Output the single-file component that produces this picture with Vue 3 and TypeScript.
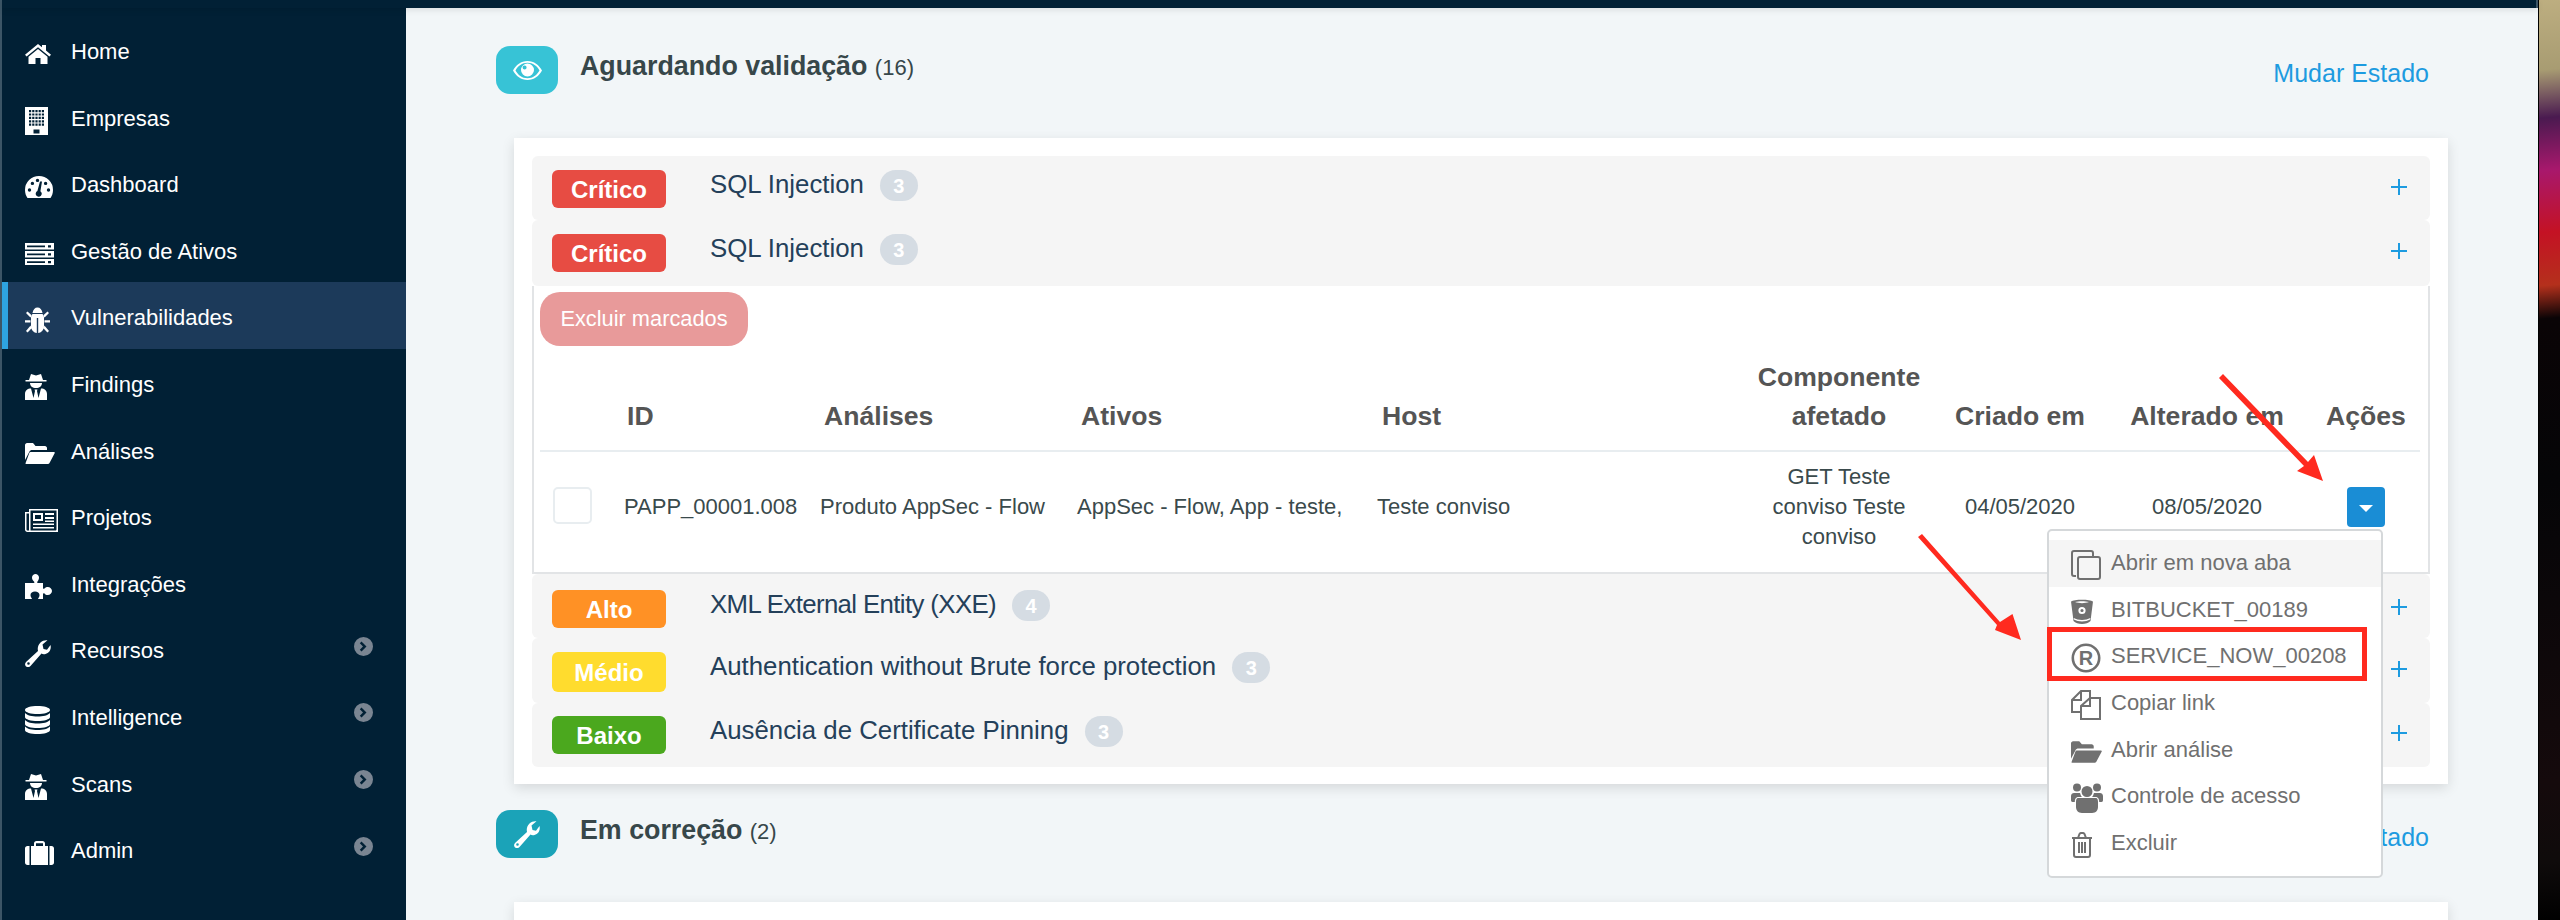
<script setup lang="ts">
function dot(x: number, y: number, r: number): string {
  return `M${x - r} ${y}a${r} ${r} 0 1 0 ${2 * r} 0a${r} ${r} 0 1 0 ${-2 * r} 0Z`
}

function buildingPath(): string {
  let d = 'M0 0H23V28H0Z'
  for (const y of [3, 6.4, 9.8, 13.2, 16.6]) {
    for (const x of [4, 7.2, 10.4, 13.6, 16.8]) d += `M${x} ${y}h2.2v2.2h-2.2z`
  }
  return d + 'M8.5 22.5h6v4h-6z'
}

interface Glyph { w: number; h: number; d: string }

const folder =
  'M0 17V2C0 1 1 0 2 0H8L10.5 3H20C21 3 22 4 22 5V7H7C6 7 5 7.5 4.5 8.5ZM5.5 9H29C30 9 30 10 29.5 10.5L24.5 20C24 20.7 23.5 21 22.5 21H1.5C.5 21 .3 20.5 .7 19.7L4.3 10C4.6 9.4 5 9 5.5 9Z'
const secret =
  'M6 0L11 1.5L16 0L18 6H21.5V7.5H.5V6H4ZM5 9H17C17 12 14.5 14 11 14C7.5 14 5 12 5 9ZM0 26V20C0 16.5 2.5 14.5 6 14.5L8.5 24L10 17L9.5 15.5H12.5L12 17L13.5 24L16 14.5C19.5 14.5 22 16.5 22 20V26Z'
const wrench =
  'M25.5 5C26.5 9 24.5 13 20.5 14C19 14.3 17.5 14.3 16.5 13.5L5.5 26C4 27.5 2 27.3 .8 26.2C-.3 25 -.2 23 1.3 21.7L13 11C12.3 8 13 5 15.5 2.5C17.5 .6 20 0 22.5 .3L17.5 4.5L18.5 9L22 9.8Z' +
  dot(3.5, 23.5, 1.3)

const nav: { label: string; icon: Glyph; more?: boolean; active?: boolean }[] = [
  { label: 'Home', icon: { w: 26, h: 20, d: 'M13 0L17 3.3V1H21V6.6L26 10.8L24.4 12.6L13 3.2L1.6 12.6L0 10.8ZM13 5L22.5 12.8V20H15.5V14H10.5V20H3.5V12.8Z' } },
  { label: 'Empresas', icon: { w: 23, h: 28, d: buildingPath() } },
  { label: 'Dashboard', icon: { w: 28, h: 22, d: 'M14 0A14 14 0 0 1 28 14C28 17 27 20 25.5 22H2.5C1 20 0 17 0 14A14 14 0 0 1 14 0Z' + dot(4.5, 14, 1.7) + dot(7.4, 7.4, 1.7) + dot(23.5, 14, 1.7) + dot(20.6, 7.4, 1.7) + dot(12.5, 4.4, 1.7) + 'M17 5.5L15.4 15.2A3 3 0 1 1 12.4 15L15 5.5Z' } },
  { label: 'Gestão de Ativos', icon: { w: 29, h: 22, d: 'M0 0H29V6.5H0ZM2 2.4V4.2H20V2.4ZM23 2.2V4.4H26V2.2ZM0 8H29V14.5H0ZM2 10.4V12.2H20V10.4ZM23 10.2V12.4H26V10.2ZM0 16H29V22H0ZM2 18.2V20H20V18.2ZM23 18V20.2H26V18Z' } },
  { label: 'Vulnerabilidades', active: true, icon: { w: 25, h: 26, d: 'M7.5 7H17.5L19 9V19C19 23 16 26 13.2 26V11H11.8V26C9 26 6 23 6 19V9ZM7.5 6C8 2.5 10 .5 12.5 .5C15 .5 17 2.5 17.5 6ZM5.4 10.5L1 6L2.5 4.5L6.9 8.5ZM5.5 13.2H0V15.4H5.5ZM5.6 18.5L1 24L2.6 25.6L6.4 21.5ZM19.6 10.5L24 6L22.5 4.5L18.1 8.5ZM19.5 13.2H25V15.4H19.5ZM19.4 18.5L24 24L22.4 25.6L18.6 21.5Z' } },
  { label: 'Findings', icon: { w: 22, h: 26, d: secret } },
  { label: 'Análises', icon: { w: 30, h: 21, d: folder } },
  { label: 'Projetos', icon: { w: 33, h: 23, d: 'M4 0H33V23H2.5C1 23 0 22 0 20.5V3H4ZM1.5 4.5V20.5C1.5 21 2 21.5 2.5 21.5H4.2C4 21 4 20.5 4 20V4.5ZM5.5 1.5H31.5V20.5C31.5 21 31 21.5 30.5 21.5H5.5ZM8 4H18V12H8ZM10 6V10H16V6ZM20 4H29V6H20ZM20 8H29V10H20ZM20 11.5H29V13H20ZM8 14.5H29V16H8ZM8 18H29V19.5H8Z' } },
  { label: 'Integrações', icon: { w: 27, h: 25, d: 'M0 9H9C9.5 9 9.5 8 9 7.5C7.5 6 7 5 7 3.5C7 1.5 8.8 0 10.5 0C12.2 0 14 1.5 14 3.5C14 5 13.5 6 12.5 7.5C12 8 12 9 12.8 9H18V14C18 15 19 15 19.5 14.5C20.5 13.5 21 13 22.8 13C25 13 27 15 27 17C27 19 25 21 22.8 21C21 21 20.5 20.5 19.5 19.5C19 19 18 19 18 20V25H13C13.5 23.5 14.5 23 14.5 21C14.5 19 12.5 17.5 10 17.5C7.5 17.5 5.5 19 5.5 21C5.5 23 6.5 23.5 7 25H0Z' } },
  { label: 'Recursos', more: true, icon: { w: 26, h: 27, d: wrench } },
  { label: 'Intelligence', more: true, icon: { w: 25, h: 28, d: 'M12.5 0C19 0 25 1.5 25 4C25 6.5 19 8 12.5 8C6 8 0 6.5 0 4C0 1.5 6 0 12.5 0ZM0 7C2 9.5 7 10.5 12.5 10.5C18 10.5 23 9.5 25 7V11C25 13.5 19 15 12.5 15C6 15 0 13.5 0 11ZM0 14C2 16.5 7 17.5 12.5 17.5C18 17.5 23 16.5 25 14V18C25 20.5 19 22 12.5 22C6 22 0 20.5 0 18ZM0 20.5C2 23 7 24 12.5 24C18 24 23 23 25 20.5V24C25 26.5 19 28 12.5 28C6 28 0 26.5 0 24Z' } },
  { label: 'Scans', more: true, icon: { w: 22, h: 26, d: secret } },
  { label: 'Admin', more: true, icon: { w: 29, h: 24, d: 'M6 5H9V2.5C9 1 10 0 11.5 0H17.5C19 0 20 1 20 2.5V5H23V24H6ZM11 2.2V5H18V2.2ZM4.5 5V24H2.5C1 24 0 23 0 21.5V7.5C0 6 1 5 2.5 5ZM24.5 5H26.5C28 5 29 6 29 7.5V21.5C29 23 28 24 26.5 24H24.5Z' } },
]

const eye: Glyph = {
  w: 29,
  h: 19,
  d: 'M14.5 0C21 0 26 4 29 9.5C26 15 21 19 14.5 19C8 19 3 15 0 9.5C3 4 8 0 14.5 0ZM14.5 1.8C9 1.8 5 5 2.5 9.5C5 14 9 17.2 14.5 17.2C20 17.2 24 14 26.5 9.5C24 5 20 1.8 14.5 1.8Z' + dot(14.5, 9, 6.5) + dot(11.6, 6.4, 2),
}
const wrenchGlyph: Glyph = { w: 26, h: 27, d: wrench }
const chevron = dot(9.5, 9.5, 9.5) + 'M7.5 4.5L12.5 9.5L7.5 14.5L5.8 12.8L9 9.5L5.8 6.2Z'

const rowsTop = [
  { level: 'Crítico', tone: 'crit', title: 'SQL Injection', count: 3, cls: 'r-a' },
  { level: 'Crítico', tone: 'crit', title: 'SQL Injection', count: 3, cls: 'r-b' },
]
const rowsBottom = [
  { level: 'Alto', tone: 'high', title: 'XML External Entity (XXE)', count: 4, cls: 'r-c' },
  { level: 'Médio', tone: 'mid', title: 'Authentication without Brute force protection', count: 3, cls: 'r-d' },
  { level: 'Baixo', tone: 'low', title: 'Ausência de Certificate Pinning', count: 3, cls: 'r-e' },
]

const heads = ['', 'ID', 'Análises', 'Ativos', 'Host', 'Componente afetado', 'Criado em', 'Alterado em', 'Ações']

const menu = [
  { label: 'Abrir em nova aba', kind: 'clone', hover: true },
  { label: 'BITBUCKET_00189', kind: 'bitbucket' },
  { label: 'SERVICE_NOW_00208', kind: 'registered' },
  { label: 'Copiar link', kind: 'copy' },
  { label: 'Abrir análise', kind: 'folder' },
  { label: 'Controle de acesso', kind: 'users' },
  { label: 'Excluir', kind: 'trash' },
]

const bucket =
  'M0 2.5C3 0 19 0 22 2.5L19.5 22C16 26 6 26 2.5 22ZM4 3C8 4.5 14 4.5 18 3C14 2 8 2 4 3ZM2.7 19C7 21.5 15 21.5 19.3 19L19.1 20.5C15 23 7 23 2.9 20.5Z' +
  dot(11, 11.5, 3.6) + dot(11, 11.5, 1.6)
const users =
  dot(16, 8.5, 5.5) + dot(6, 4.5, 4) + dot(26, 4.5, 4) +
  'M7 15H25C26.5 15 27 17 27 19V24C27 27 25 30 21 30H11C7 30 5 27 5 24V19C5 17 5.5 15 7 15Z' +
  'M3 10H9C9.5 11.5 10 13 11 14H6.5C4.5 14.5 3.8 16.5 3.8 19H1.5C.5 19 0 18 0 17V13C0 11 1.5 10 3 10Z' +
  'M29 10H23C22.5 11.5 22 13 21 14H25.5C27.5 14.5 28.2 16.5 28.2 19H30.5C31.5 19 32 18 32 17V13C32 11 30.5 10 29 10Z'
</script>

<template>
  <div class="root">
    <div class="app">
      <div class="topbar"></div>
      <div class="body">
        <aside class="sidebar">
          <a v-for="item in nav" :key="item.label" class="nav" :class="{ active: item.active }">
            <span class="nav-icon">
              <svg :width="item.icon.w" :height="item.icon.h" :viewBox="`0 0 ${item.icon.w} ${item.icon.h}`">
                <path :d="item.icon.d" fill="#fff" fill-rule="evenodd" />
              </svg>
            </span>
            <span>{{ item.label }}</span>
            <svg v-if="item.more" class="more" width="19" height="19" viewBox="0 0 19 19">
              <path :d="chevron" fill="#7a8592" fill-rule="evenodd" />
            </svg>
          </a>
        </aside>

        <main class="main">
          <header class="head">
            <span class="head-icon eye">
              <svg :width="eye.w" :height="eye.h" :viewBox="`0 0 ${eye.w} ${eye.h}`">
                <path :d="eye.d" fill="#fff" fill-rule="evenodd" />
              </svg>
            </span>
            <h2 class="title">Aguardando validação <small>(16)</small></h2>
            <a class="link">Mudar Estado</a>
          </header>

          <section class="card">
            <div v-for="r in rowsTop" :key="r.cls" class="row" :class="r.cls">
              <span class="level" :class="r.tone">{{ r.level }}</span>
              <span class="row-title">{{ r.title }}</span>
              <span class="count">{{ r.count }}</span>
              <svg class="plus" width="16" height="16" viewBox="0 0 16 16"><path d="M8 0V16M0 8H16" stroke="#1d9be0" stroke-width="2" /></svg>
            </div>

            <div class="detail">
              <button class="bulk">Excluir marcados</button>
              <div class="grid grid-head">
                <div v-for="(h, i) in heads" :key="i" class="th" :class="`c${i}`">{{ h }}</div>
              </div>
              <div class="grid grid-row">
                <div class="cell c0"><span class="check"></span></div>
                <div class="cell">PAPP_00001.008</div>
                <div class="cell">Produto AppSec - Flow</div>
                <div class="cell">AppSec - Flow, App - teste,</div>
                <div class="cell">Teste conviso</div>
                <div class="cell center"><span class="wrap">GET Teste conviso Teste conviso</span></div>
                <div class="cell center">04/05/2020</div>
                <div class="cell center">08/05/2020</div>
                <div class="cell center">
                  <span class="action">
                    <button class="caret"><span class="tri"></span></button>
                    <div class="menu">
                      <div v-for="m in menu" :key="m.label" class="mi" :class="{ hover: m.hover }">
                        <span class="mi-icon">
                          <svg v-if="m.kind === 'clone'" width="30" height="30" viewBox="0 0 30 30" fill="none" stroke="#707070" stroke-width="2">
                            <path d="M5 26H3C2 26 1 25 1 24V3C1 2 2 1 3 1H20C21 1 22 2 22 3V6" />
                            <rect x="7" y="7" width="22" height="22" rx="2" />
                          </svg>
                          <svg v-else-if="m.kind === 'bitbucket'" width="22" height="26" viewBox="0 0 22 26">
                            <path :d="bucket" fill="#707070" fill-rule="evenodd" />
                          </svg>
                          <svg v-else-if="m.kind === 'registered'" width="30" height="30" viewBox="0 0 30 30">
                            <circle cx="15" cy="15" r="13.2" fill="none" stroke="#707070" stroke-width="2.6" />
                            <text x="15" y="22" text-anchor="middle" class="reg">R</text>
                          </svg>
                          <svg v-else-if="m.kind === 'copy'" width="30" height="30" viewBox="0 0 30 30" fill="none" stroke="#707070" stroke-width="2">
                            <path d="M19 8V1H10L1 10V22H10" />
                            <path d="M10 1V10H1" />
                            <path d="M19 8H29V29H10V16ZM19 8V16H10" />
                          </svg>
                          <svg v-else-if="m.kind === 'folder'" width="31" height="22" viewBox="0 0 30 21">
                            <path :d="folder" fill="#707070" fill-rule="evenodd" />
                          </svg>
                          <svg v-else-if="m.kind === 'users'" width="32" height="30" viewBox="0 0 32 30">
                            <path :d="users" fill="#707070" fill-rule="evenodd" />
                          </svg>
                          <svg v-else width="22" height="26" viewBox="0 0 22 26" fill="none" stroke="#707070" stroke-width="2">
                            <path d="M1 6H21M7 6L8.5 2C9 1.3 9.5 1 10 1H12C12.5 1 13 1.3 13.5 2L15 6" />
                            <path d="M3 6V23C3 24 4 25 5 25H17C18 25 19 24 19 23V6" />
                            <path d="M8 10V21M11 10V21M14 10V21" />
                          </svg>
                        </span>
                        <span>{{ m.label }}</span>
                      </div>
                    </div>
                  </span>
                </div>
              </div>
            </div>

            <div v-for="r in rowsBottom" :key="r.cls" class="row" :class="r.cls">
              <span class="level" :class="r.tone">{{ r.level }}</span>
              <span class="row-title">{{ r.title }}</span>
              <span class="count">{{ r.count }}</span>
              <svg class="plus" width="16" height="16" viewBox="0 0 16 16"><path d="M8 0V16M0 8H16" stroke="#1d9be0" stroke-width="2" /></svg>
            </div>
          </section>

          <header class="head second">
            <span class="head-icon tool">
              <svg :width="wrenchGlyph.w" :height="wrenchGlyph.h" :viewBox="`0 0 ${wrenchGlyph.w} ${wrenchGlyph.h}`">
                <path :d="wrenchGlyph.d" fill="#fff" fill-rule="evenodd" />
              </svg>
            </span>
            <h2 class="title">Em correção <small>(2)</small></h2>
            <a class="link">Mudar Estado</a>
          </header>

          <section class="card empty"></section>
        </main>
      </div>
    </div>

    <div class="wallpaper"></div>

    <svg class="marks" width="2560" height="920" viewBox="0 0 2560 920">
      <g fill="#ff2a1f" stroke="none">
        <path d="M2219 378L2223 374L2308 462L2314 455L2323 481L2297 471L2304 466Z" />
        <path d="M1918 537L1922 534L2000 622L2012.5 614L2021 640L1995 630L1997 625Z" />
      </g>
      <rect x="2049.5" y="629.5" width="315" height="49" fill="none" stroke="#ff2a1f" stroke-width="5" />
    </svg>
  </div>
</template>

<style>
html, body { margin: 0; background: #000; }
</style>

<style scoped>
.root {
  position: relative;
  display: flex;
  width: 2560px;
  height: 920px;
  overflow: hidden;
  font-family: "Liberation Sans", Arial, sans-serif;
  background: #000;
}
.app {
  width: 2538px;
  height: 920px;
  display: flex;
  flex-direction: column;
  flex: none;
  box-sizing: border-box;
  border-left: 2px solid #3c5566;
}
.topbar {
  height: 8px;
  flex: none;
  background: #012035;
  border-right: 2px solid #3c5566;
  position: relative;
  z-index: 2;
  box-shadow: 0 2px 6px rgba(0, 0, 0, .1);
}
.body { display: flex; flex: 1; min-height: 0; }
.sidebar {
  width: 404px;
  flex: none;
  background: #012035;
  padding-top: 8px;
  box-sizing: border-box;
}
.nav {
  display: flex;
  align-items: center;
  height: 66.6px;
  box-sizing: border-box;
  padding: 21px 33px 15.6px 23px;
  color: #fff;
  font-size: 22px;
  line-height: 30px;
}
.nav.active {
  background: #1c3a5a;
  box-shadow: inset 6px 0 0 #2ea3e0;
}
.nav-icon { width: 46px; flex: none; display: flex; margin-top: 4px; }
.more { margin-left: auto; margin-bottom: 10px; }

.main {
  flex: 1;
  min-width: 0;
  background: #f2f6f8;
  padding: 38px 90px 0 90px;
  overflow: hidden;
  box-sizing: border-box;
}
.head { display: flex; align-items: flex-start; height: 48px; }
.head.second { margin-top: 26px; }
.head-icon {
  width: 62px;
  height: 48px;
  flex: none;
  border-radius: 14px;
  display: flex;
  align-items: center;
  justify-content: center;
  margin-right: 22px;
}
.head-icon.eye { background: #37c3d6; }
.head-icon.tool { background: #1ba3b8; }
.title {
  margin: 5px 0 0;
  font-size: 26.8px;
  line-height: 30px;
  font-weight: 700;
  color: #37474a;
}
.title small { font-size: 22px; font-weight: 400; }
.link {
  margin: 12px 19px 0 auto;
  font-size: 25px;
  line-height: 30px;
  color: #1d9be0;
}
.card {
  margin: 44px 0 0 18px;
  background: #fff;
  padding: 18px 18px 17px;
  box-shadow: 0 4px 12px rgba(0, 0, 0, .12);
}
.card.empty { height: 200px; }
.row {
  display: flex;
  align-items: flex-start;
  background: #f5f5f5;
  border-radius: 6px;
  padding: 14px 23px 0 20px;
  box-sizing: border-box;
}
.r-a { height: 64px; }
.r-b { height: 66px; }
.r-c { height: 64px; padding-top: 16px; }
.r-d { height: 65px; }
.r-e { height: 64px; padding-top: 13px; }
.level {
  width: 114px;
  height: 38px;
  flex: none;
  border-radius: 6px;
  color: #fff;
  font-size: 24px;
  font-weight: 700;
  line-height: 40px;
  text-align: center;
  margin-right: 44px;
}
.r-d .level { height: 40px; line-height: 42px; }
.crit { background: #e74c43; }
.high { background: #ff9125; }
.mid { background: #ffdc2e; }
.low { background: #4ba81e; }
.row-title {
  font-size: 25.8px;
  line-height: 30px;
  margin-top: -1px;
  color: #24405a;
}
.r-c .row-title { letter-spacing: -.62px; }
.count {
  width: 38px;
  height: 31px;
  flex: none;
  margin-left: 16px;
  border-radius: 16px;
  background: #d5dce3;
  color: #fff;
  font-size: 20px;
  font-weight: 700;
  line-height: 33px;
  text-align: center;
}
.plus { margin: 9px 0 0 auto; flex: none; }
.detail {
  border: 2px solid #e2e4e6;
  border-top: 0;
  height: 288px;
  box-sizing: border-box;
  padding: 6px 8px 0 6px;
}
.bulk {
  display: block;
  width: 208px;
  height: 54px;
  padding: 0;
  border: 0;
  border-radius: 20px;
  background: #e89a9a;
  color: #fff;
  font: 21.8px "Liberation Sans", Arial, sans-serif;
}
.grid {
  display: grid;
  grid-template-columns: 80px 196px 257px 300px 367px 198px 164px 210px 108px;
}
.grid-head {
  height: 106px;
  box-sizing: border-box;
  align-items: end;
  border-bottom: 2px solid #e8edf0;
  padding-bottom: 14px;
}
.th {
  font-size: 26.6px;
  line-height: 39px;
  font-weight: 700;
  color: #555;
  padding-left: 8px;
}
.th.c1 { padding-left: 7px; }
.th.c4 { padding-left: 9px; }
.th.c5, .th.c6, .th.c7, .th.c8 { text-align: center; padding: 0 14px; }
.th.c6, .th.c7, .th.c8 { padding: 0; }
.grid-row { height: 120px; box-sizing: border-box; padding: 10px 0 20px; align-items: center; }
.cell {
  font-size: 22px;
  line-height: 30px;
  color: #3a4a4c;
  padding-left: 4px;
}
.cell.center { text-align: center; padding-left: 0; }
.wrap { display: inline-block; width: 150px; }
.c0 { padding-left: 13px; display: flex; }
.check {
  width: 39px;
  height: 37px;
  box-sizing: border-box;
  border: 2px solid #e8edf0;
  border-radius: 5px;
  background: #fff;
  margin-top: -4px;
}
.action { position: relative; display: inline-flex; vertical-align: middle; }
.caret {
  width: 38px;
  height: 40px;
  padding: 0;
  border: 0;
  border-radius: 4px;
  background: #1a8dd5;
  display: flex;
  align-items: center;
  justify-content: center;
}
.tri {
  width: 0;
  height: 0;
  border-left: 7px solid transparent;
  border-right: 7px solid transparent;
  border-top: 7px solid #fff;
  margin-top: 2px;
}
.menu {
  position: absolute;
  top: 42px;
  right: 2px;
  z-index: 5;
  width: 336px;
  box-sizing: border-box;
  background: #fff;
  border: 2px solid #d5d8da;
  border-radius: 5px;
  padding: 9px 0 10px;
  text-align: left;
}
.mi {
  display: flex;
  align-items: center;
  height: 46.6px;
  padding-left: 22px;
  font-size: 22px;
  color: #707070;
  white-space: nowrap;
}
.mi.hover { background: #f5f5f5; }
.mi-icon { width: 40px; flex: none; display: flex; margin-top: 4px; }
.reg {
  font-family: "Liberation Sans", Arial, sans-serif;
  font-weight: 700;
  font-size: 20px;
  fill: #707070;
}
.wallpaper {
  flex: 1;
  border-left: 1px solid #000;
  background: linear-gradient(175deg, #bdae80 0, #a89c72 70px, #4a1a50 118px, #a8186c 170px, #c41224 232px, #b4301c 285px, #0a0406 318px, #050507 480px, #150a0c 780px, #0f0b0b 860px, #000 920px);
}
.marks { position: absolute; left: 0; top: 0; z-index: 10; pointer-events: none; }
</style>
